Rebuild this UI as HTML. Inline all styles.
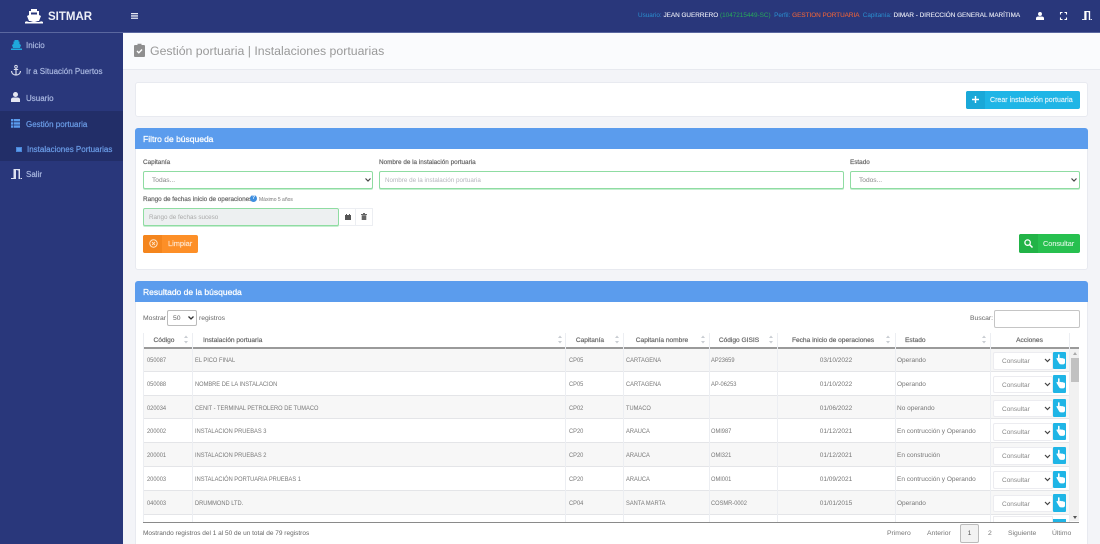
<!DOCTYPE html>
<html lang="es"><head><meta charset="utf-8"><title>SITMAR</title>
<style>
*{box-sizing:border-box}
html,body{margin:0;padding:0;width:1100px;height:544px;overflow:hidden}
body{background:#f3f4f8;font-family:"Liberation Sans",sans-serif;color:#666}
#w{position:relative;width:1100px;height:544px;overflow:hidden;background:#f3f4f8}
.a{position:absolute;white-space:nowrap}
.t{position:absolute;white-space:nowrap;line-height:12px;height:12px;margin-top:1px}
.card{position:absolute;background:#fff;border:1px solid #e8eaf0;border-radius:3px}
.hd{position:absolute;background:#5b9ced;color:#fff;font-size:8.5px;line-height:22px;height:21px;padding-left:8px;border-radius:3px 3px 0 0;-webkit-text-stroke:.25px #fff}
.lb{font-size:6.350px;color:#666;-webkit-text-stroke:.2px #666;margin-top:0}
.inp{position:absolute;height:18px;background:#fff;border:1px solid #8fdca2;border-radius:2px;font-size:6.6px;line-height:18px;padding-left:8px;color:#888;box-shadow:0 1px 0 #c5eed0}
.mi{color:#a9b7e0;font-size:8px;-webkit-text-stroke:.2px #a9b7e0}
.mb{color:#6b9de8;-webkit-text-stroke:.2px #6b9de8}
.th{font-size:6.6px;color:#666;text-align:center;-webkit-text-stroke:.2px #666}
.td{font-size:6.5px;color:#777}
.u{transform:scaleX(.88);transform-origin:0 0}
.vl{position:absolute;width:1px;background:#eceef2;top:333px;height:189px}
.row{position:absolute;left:143px;width:926px;height:23.8px;border-bottom:1px solid #e4e5e8}
.sel{position:absolute;left:993px;width:60px;height:17.500px;background:#fff;border:1px solid #ececf0;border-radius:2px;font-size:6.5px;line-height:18px;padding-left:8px;color:#888}
.hand{position:absolute;left:1053px;width:13px;height:17.500px;background:#1fb5e6;border-radius:1px}
.sv{position:absolute;overflow:visible}
</style></head><body><div id="w">

<!-- top bar -->
<div class="a" style="left:0;top:0;width:1100px;height:33px;background:#29377b;border-bottom:1px solid #5a679f"></div>
<!-- sidebar -->
<div class="a" style="left:0;top:33px;width:123px;height:511px;background:#29377b"></div>
<div class="a" style="left:0;top:111px;width:123px;height:50px;background:#222e68"></div>

<svg class="sv" style="left:25px;top:9px" width="18" height="15" viewBox="0 0 18 15"><path d="M6 0h6v2h2v4l2 1-2 5H4L2 7l2-1V2h2z" fill="#fff"/><path d="M6 3.500h6v2H6z" fill="#29377b"/><path d="M0 13c2-1.500 3 0 4.500 0S7 12 9 12s3 1 4.500 1 2.500-1.500 4.500 0v1.500H0z" fill="#fff"/></svg>
<div class="t" style="left:48px;top:10px;height:14px;line-height:14px;font-size:11.500px;font-weight:bold;color:#eef0f8;margin-top:0">SITMAR</div>
<svg class="sv" style="left:131px;top:13px" width="7" height="6"><path d="M0 0h7v1.300H0zM0 2.300h7v1.300H0zM0 4.600h7v1.300H0z" fill="#e6e8f2"/></svg>

<svg class="sv" style="left:11px;top:40px" width="11" height="10" viewBox="0 0 11 10"><path d="M3.500 0h4v1.500h1v2.500l1.500 1-1 3H2L1 5l1.500-1V1.500h1z" fill="#1fa9dc"/><path d="M0 8.500h11V10H0z" fill="#1fa9dc"/></svg>
<div class="t mi" style="left:26px;top:39px">Inicio</div>
<svg class="sv" style="left:11px;top:65px" width="10" height="11" viewBox="0 0 10 11"><circle cx="5" cy="1.700" r="1.300" fill="none" stroke="#d8dcec" stroke-width="1"/><path d="M4.400 3h1.200v6.500H4.400zM2.800 4h4.400v1H2.800z" fill="#d8dcec"/><path d="M.5 6c.2 2.500 2 4 4.500 4s4.300-1.500 4.500-4" fill="none" stroke="#d8dcec" stroke-width="1.200"/></svg>
<div class="t mi" style="left:26px;top:65px">Ir a Situación Puertos</div>
<svg class="sv" style="left:11px;top:92px" width="9" height="10" viewBox="0 0 9 10"><circle cx="4.500" cy="2.500" r="2.500" fill="#e4e6f2"/><path d="M0 10V7.500C0 6 1.500 5.500 2.500 5.500h4C7.500 5.500 9 6 9 7.500V10z" fill="#e4e6f2"/></svg>
<div class="t mi" style="left:26px;top:92px">Usuario</div>
<svg class="sv" style="left:11px;top:119px" width="9" height="9" viewBox="0 0 9 9"><path d="M0 0h2.400v2.400H0zM3 0h6v2.400H3zM0 3.200h2.400v2.400H0zM3 3.200h6v2.400H3zM0 6.400h2.400v2.400H0zM3 6.400h6v2.400H3z" fill="#5b9ced"/></svg>
<div class="t mi mb" style="left:26px;top:118px">Gestión portuaria</div>
<div class="a" style="left:16px;top:147px;width:6px;height:5px;background:#5b9ced;border:1px solid #4a86d8"></div>
<div class="t mi mb" style="left:27px;top:143px">Instalaciones Portuarias</div>
<svg class="sv" style="left:11px;top:169px" width="11" height="10" viewBox="0 0 11 10"><path d="M2.500 0H9v10H7.500V1.500L5 1v9H2.500z" fill="#dfe2f0"/><path d="M0 9h2.500v1H0zM9.500 9H11v1H9.500z" fill="#dfe2f0"/></svg>
<div class="t mi" style="left:26px;top:168px">Salir</div>

<!-- top info -->
<div class="a" style="left:638px;top:10px;font-size:6.370px;line-height:12px;color:#e8eaf4;-webkit-text-stroke:.12px #e8eaf4"><span style="color:#2a8fd0;-webkit-text-stroke:0">Usuario:</span> JEAN GUERRERO <span style="color:#27a85a;-webkit-text-stroke:0">(1047215449-SC)</span> <span style="color:#2a8fd0;-webkit-text-stroke:0">&nbsp;Perfil:</span> <span style="color:#e2623e;-webkit-text-stroke:.12px #e2623e">GESTION PORTUARIA</span> <span style="color:#2a8fd0;-webkit-text-stroke:0">&nbsp;Capitanía:</span> DIMAR - DIRECCIÓN GENERAL MARÍTIMA</div>
<svg class="sv" style="left:1036px;top:12px" width="8" height="8" viewBox="0 0 9 9"><circle cx="4.500" cy="2.200" r="2.200" fill="#fff"/><path d="M0 9V7c0-1.500 1.500-2 2.500-2h4C7.500 5 9 5.500 9 7v2z" fill="#fff"/></svg>
<svg class="sv" style="left:1060px;top:12px" width="7" height="8" viewBox="0 0 7 8"><path d="M.5 2.500V.5h2M4.500.5h2v2M6.500 5.500v2h-2M2.500 7.500h-2v-2" fill="none" stroke="#fff" stroke-width="1.100"/></svg>
<svg class="sv" style="left:1082px;top:11px" width="10" height="9" viewBox="0 0 11 10"><path d="M2.500 0H9v10H7.500V1.500L5 1v9H2.500z" fill="#fff"/><path d="M0 9h2.500v1H0zM9.500 9H11v1H9.500z" fill="#fff"/></svg>

<!-- title -->
<div class="a" style="left:123px;top:33px;width:977px;height:37px;background:#fafbfd;border-bottom:1px solid #e7e9ef"></div>
<svg class="sv" style="left:134px;top:43px" width="11" height="14" viewBox="0 0 11 14"><path d="M1 2h2.500V.8h4V2H10a1 1 0 0 1 1 1v10a1 1 0 0 1-1 1H1a1 1 0 0 1-1-1V3a1 1 0 0 1 1-1z" fill="#8f8f8f"/><path d="M3 8l1.800 1.800L8 6.500" fill="none" stroke="#fff" stroke-width="1.400"/></svg>
<div class="a" style="left:150px;top:43px;font-size:12.300px;line-height:16px;color:#999">Gestión portuaria | Instalaciones portuarias</div>

<!-- action card -->
<div class="card" style="left:135px;top:82px;width:953px;height:35px"></div>
<div class="a" style="left:966px;top:91px;width:114px;height:18px;background:#1fb5e6;border-radius:2px"></div>
<div class="a" style="left:966px;top:91px;width:19px;height:18px;background:#1aa8d8;border-radius:2px 0 0 2px"></div>
<svg class="sv" style="left:972px;top:96px" width="7" height="7"><path d="M2.800 0h1.400v2.800H7v1.400H4.200V7H2.800V4.200H0V2.800h2.800z" fill="#fff"/></svg>
<div class="t" style="left:990px;top:94px;font-size:7.050px;color:#e4f5fb;-webkit-text-stroke:.15px #e4f5fb">Crear instalación portuaria</div>

<!-- filter -->
<div class="card" style="left:135px;top:128px;width:953px;height:142px"></div>
<div class="hd" style="left:135px;top:128px;width:953px">Filtro de búsqueda</div>
<div class="t lb" style="left:143px;top:157px">Capitanía</div>
<div class="t lb" style="left:379px;top:157px">Nombre de la instalación portuaria</div>
<div class="t lb" style="left:850px;top:157px">Estado</div>
<div class="inp" style="left:143px;top:171px;width:230px">Todas...</div>
<svg class="sv" style="left:365px;top:178px" width="6" height="4"><path d="M.5.500L3 3l2.500-2.500" fill="none" stroke="#444" stroke-width="1.200"/></svg>
<div class="inp" style="left:379px;top:171px;width:465px;color:#b5b5bd;padding-left:5px;font-size:6.300px">Nombre de la instalación portuaria</div>
<div class="inp" style="left:850px;top:171px;width:230px">Todos...</div>
<svg class="sv" style="left:1071px;top:178px" width="6" height="4"><path d="M.5.500L3 3l2.500-2.500" fill="none" stroke="#444" stroke-width="1.200"/></svg>
<div class="t lb" style="left:143px;top:194px">Rango de fechas inicio de operaciones</div>
<div class="a" style="left:250px;top:195px;width:7px;height:7px;border-radius:50%;background:#3f8fe0;color:#fff;font-size:5px;line-height:7px;text-align:center;font-weight:bold">?</div>
<div class="t" style="left:259px;top:193px;font-size:5px;color:#777">Máximo 5 años</div>
<div class="inp" style="left:143px;top:208px;width:196px;background:#edf0f1;color:#aaa;padding-left:5px;font-size:6.300px">Rango de fechas suceso</div>
<div class="a" style="left:339px;top:208px;width:34px;height:18px;border:1px solid #eceef2;border-left:0"></div>
<div class="a" style="left:355px;top:208px;width:1px;height:18px;background:#eceef2"></div>
<svg class="sv" style="left:345px;top:214px" width="6" height="6"><path d="M0 1h6v5H0z" fill="#555"/><path d="M1 0h1v1H1zM4 0h1v1H4z" fill="#555"/></svg>
<svg class="sv" style="left:361px;top:213px" width="6" height="7"><path d="M0 1h6v1H0zM2 0h2v1H2zM.7 2.300h4.600V7H.7z" fill="#666"/></svg>
<div class="a" style="left:143px;top:235px;width:55px;height:18px;background:#fd8f27;border-radius:2px"></div>
<div class="a" style="left:143px;top:235px;width:19px;height:18px;background:#f4851d;border-radius:2px 0 0 2px"></div>
<svg class="sv" style="left:149px;top:239px" width="9" height="9" viewBox="0 0 9 9"><circle cx="4.500" cy="4.500" r="3.700" fill="none" stroke="#ffe3c5" stroke-width="1"/><path d="M3 3l3 3M6 3L3 6" stroke="#ffe3c5" stroke-width=".9"/></svg>
<div class="t" style="left:168px;top:237px;font-size:7.400px;color:#ffe8d2;-webkit-text-stroke:.15px #ffe8d2">Limpiar</div>
<div class="a" style="left:1019px;top:234px;width:61px;height:19px;background:#27c04f;border-radius:2px"></div>
<div class="a" style="left:1019px;top:234px;width:19px;height:19px;background:#22b347;border-radius:2px 0 0 2px"></div>
<svg class="sv" style="left:1024px;top:239px" width="9" height="9" viewBox="0 0 9 9"><circle cx="3.600" cy="3.600" r="2.700" fill="none" stroke="#fff" stroke-width="1.300"/><path d="M5.600 5.600L8.500 8.500" stroke="#fff" stroke-width="1.500"/></svg>
<div class="t" style="left:1043px;top:237px;font-size:7.300px;color:#dff7e5;-webkit-text-stroke:.1px #dff7e5">Consultar</div>

<!-- results -->
<div class="card" style="left:135px;top:281px;width:953px;height:263px;border-bottom:0;border-radius:3px 3px 0 0"></div>
<div class="hd" style="left:135px;top:281px;width:953px">Resultado de la búsqueda</div>
<div class="t td" style="left:143px;top:312px;color:#666;font-size:6.800px">Mostrar</div>
<div class="a" style="left:167px;top:310px;width:30px;height:16px;border:1px solid #bbb;border-radius:2px;font-size:6.800px;line-height:15px;padding-left:5px;color:#666">50</div>
<svg class="sv" style="left:188px;top:316px" width="6" height="4"><path d="M.5.500L3 3l2.500-2.500" fill="none" stroke="#333" stroke-width="1.300"/></svg>
<div class="t td" style="left:199px;top:312px;color:#666;font-size:6.800px">registros</div>
<div class="t td" style="left:970px;top:312px;color:#666;font-size:6.800px">Buscar:</div>
<div class="a" style="left:994px;top:310px;width:86px;height:18px;border:1px solid #c5c5c5;border-radius:2px;background:#fff"></div>

<!-- rows -->
<div class="row" style="top:348px;background:#f7f7f7"></div>
<div class="row" style="top:371.800px;background:#fff"></div>
<div class="row" style="top:395.600px;background:#f7f7f7"></div>
<div class="row" style="top:419.400px;background:#fff"></div>
<div class="row" style="top:443.200px;background:#f7f7f7"></div>
<div class="row" style="top:467px;background:#fff"></div>
<div class="row" style="top:490.800px;background:#f7f7f7"></div>
<div class="row" style="top:514.600px;background:#fff;height:7px;border:0"></div>
<div class="a" style="left:143px;top:347px;width:936px;height:2px;background:#9a9a9a"></div>
<div class="a" style="left:143px;top:521.500px;width:936px;height:1.500px;background:#8a8a8a"></div>

<div class="vl" style="left:143px"></div><div class="vl" style="left:192px"></div><div class="vl" style="left:565px"></div><div class="vl" style="left:623px"></div><div class="vl" style="left:709px"></div><div class="vl" style="left:777px"></div><div class="vl" style="left:895px"></div><div class="vl" style="left:990px"></div><div class="vl" style="left:1069px"></div>

<div class="t th" style="left:143px;top:334px;width:42px">Código</div>
<div class="t th" style="left:203px;top:334px">Instalación portuaria</div>
<div class="t th" style="left:565px;top:334px;width:50px">Capitanía</div>
<div class="t th" style="left:623px;top:334px;width:78px">Capitanía nombre</div>
<div class="t th" style="left:709px;top:334px;width:60px">Código GISIS</div>
<div class="t th" style="left:777px;top:334px;width:112px">Fecha inicio de operaciones</div>
<div class="t th" style="left:905px;top:334px">Estado</div>
<div class="t th" style="left:990px;top:334px;width:79px">Acciones</div>
<svg class="sv" style="left:0;top:0" width="1100" height="544"><g fill="#c9cdd3"><path d="M184 338l2-2.500 2 2.500zM184 341h4l-2 2.500z"/><path d="M558 338l2-2.500 2 2.500zM558 341h4l-2 2.500z"/><path d="M615 338l2-2.500 2 2.500zM615 341h4l-2 2.500z"/><path d="M701 338l2-2.500 2 2.500zM701 341h4l-2 2.500z"/><path d="M769 338l2-2.500 2 2.500zM769 341h4l-2 2.500z"/><path d="M886 338l2-2.500 2 2.500zM886 341h4l-2 2.500z"/><path d="M982 338l2-2.500 2 2.500zM982 341h4l-2 2.500z"/></g></svg>

<!-- row text -->
<div class="t td u" style="left:147px;top:354px">050087</div><div class="t td u" style="left:195px;top:354px">EL PICO FINAL</div><div class="t td u" style="left:569px;top:354px">CP05</div><div class="t td u" style="left:626px;top:354px">CARTAGENA</div><div class="t td u" style="left:711px;top:354px">AP23659</div><div class="t td" style="left:777px;top:354px;width:118px;text-align:center">03/10/2022</div><div class="t td" style="left:897px;top:354px">Operando</div>
<div class="t td u" style="left:147px;top:378px">050088</div><div class="t td u" style="left:195px;top:378px">NOMBRE DE LA INSTALACION</div><div class="t td u" style="left:569px;top:378px">CP05</div><div class="t td u" style="left:626px;top:378px">CARTAGENA</div><div class="t td u" style="left:711px;top:378px">AP-06253</div><div class="t td" style="left:777px;top:378px;width:118px;text-align:center">01/10/2022</div><div class="t td" style="left:897px;top:378px">Operando</div>
<div class="t td u" style="left:147px;top:402px">020034</div><div class="t td u" style="left:195px;top:402px">CENIT - TERMINAL PETROLERO DE TUMACO</div><div class="t td u" style="left:569px;top:402px">CP02</div><div class="t td u" style="left:626px;top:402px">TUMACO</div><div class="t td" style="left:777px;top:402px;width:118px;text-align:center">01/06/2022</div><div class="t td" style="left:897px;top:402px">No operando</div>
<div class="t td u" style="left:147px;top:425px">200002</div><div class="t td u" style="left:195px;top:425px">INSTALACION PRUEBAS 3</div><div class="t td u" style="left:569px;top:425px">CP20</div><div class="t td u" style="left:626px;top:425px">ARAUCA</div><div class="t td u" style="left:711px;top:425px">OMI987</div><div class="t td" style="left:777px;top:425px;width:118px;text-align:center">01/12/2021</div><div class="t td" style="left:897px;top:425px">En contrucción y Operando</div>
<div class="t td u" style="left:147px;top:449px">200001</div><div class="t td u" style="left:195px;top:449px">INSTALACION PRUEBAS 2</div><div class="t td u" style="left:569px;top:449px">CP20</div><div class="t td u" style="left:626px;top:449px">ARAUCA</div><div class="t td u" style="left:711px;top:449px">OMI321</div><div class="t td" style="left:777px;top:449px;width:118px;text-align:center">01/12/2021</div><div class="t td" style="left:897px;top:449px">En construción</div>
<div class="t td u" style="left:147px;top:473px">200003</div><div class="t td u" style="left:195px;top:473px">INSTALACIÓN PORTUARIA PRUEBAS 1</div><div class="t td u" style="left:569px;top:473px">CP20</div><div class="t td u" style="left:626px;top:473px">ARAUCA</div><div class="t td u" style="left:711px;top:473px">OMI001</div><div class="t td" style="left:777px;top:473px;width:118px;text-align:center">01/09/2021</div><div class="t td" style="left:897px;top:473px">En contrucción y Operando</div>
<div class="t td u" style="left:147px;top:497px">040003</div><div class="t td u" style="left:195px;top:497px">DRUMMOND LTD.</div><div class="t td u" style="left:569px;top:497px">CP04</div><div class="t td u" style="left:626px;top:497px">SANTA MARTA</div><div class="t td u" style="left:711px;top:497px">COSMR-0002</div><div class="t td" style="left:777px;top:497px;width:118px;text-align:center">01/01/2015</div><div class="t td" style="left:897px;top:497px">Operando</div>

<!-- actions -->
<div class="sel" style="top:352px">Consultar</div><div class="hand" style="top:351.500px"></div>
<div class="sel" style="top:375.800px">Consultar</div><div class="hand" style="top:375.300px"></div>
<div class="sel" style="top:399.600px">Consultar</div><div class="hand" style="top:399.100px"></div>
<div class="sel" style="top:423.400px">Consultar</div><div class="hand" style="top:422.900px"></div>
<div class="sel" style="top:447.200px">Consultar</div><div class="hand" style="top:446.700px"></div>
<div class="sel" style="top:471px">Consultar</div><div class="hand" style="top:470.500px"></div>
<div class="sel" style="top:494.800px">Consultar</div><div class="hand" style="top:494.300px"></div>
<div class="a" style="left:993px;top:516px;width:60px;height:5.500px;background:#fff;border:1px solid #ececf0;border-bottom:0"></div>
<div class="a" style="left:1053px;top:519px;width:13px;height:2.500px;background:#1fb5e6"></div>
<svg class="sv" style="left:0;top:0" width="1100" height="544">
<g fill="#fff"><path d="M1058 355c0-1 1.600-1 1.600 0v3.200c.8-.5 1.700-.4 2 .1.800-.4 1.500-.2 1.800.3 1-.2 1.600.4 1.600 1.200v2.600c0 1.200-.8 2-2 2h-2c-.9 0-1.400-.4-1.900-1.100l-2.500-4.300c-.5-.9.500-1.600 1.300-.9l.1.900z"/>
<path d="M1058 379c0-1 1.600-1 1.600 0v3.200c.8-.5 1.700-.4 2 .1.800-.4 1.500-.2 1.800.3 1-.2 1.600.4 1.600 1.200v2.600c0 1.200-.8 2-2 2h-2c-.9 0-1.400-.4-1.900-1.100l-2.500-4.300c-.5-.9.500-1.600 1.300-.9l.1.900z"/>
<path d="M1058 403c0-1 1.600-1 1.600 0v3.200c.8-.5 1.700-.4 2 .1.800-.4 1.500-.2 1.800.3 1-.2 1.600.4 1.600 1.200v2.600c0 1.200-.8 2-2 2h-2c-.9 0-1.400-.4-1.900-1.100l-2.500-4.300c-.5-.9.500-1.600 1.300-.9l.1.900z"/>
<path d="M1058 426.500c0-1 1.600-1 1.600 0v3.200c.8-.5 1.700-.4 2 .1.800-.4 1.500-.2 1.800.3 1-.2 1.600.4 1.600 1.200v2.600c0 1.200-.8 2-2 2h-2c-.9 0-1.400-.4-1.900-1.100l-2.500-4.300c-.5-.9.500-1.600 1.300-.9l.1.900z"/>
<path d="M1058 450.500c0-1 1.600-1 1.600 0v3.200c.8-.5 1.700-.4 2 .1.800-.4 1.500-.2 1.800.3 1-.2 1.600.4 1.600 1.200v2.600c0 1.200-.8 2-2 2h-2c-.9 0-1.400-.4-1.900-1.100l-2.500-4.300c-.5-.9.500-1.600 1.300-.9l.1.900z"/>
<path d="M1058 474c0-1 1.600-1 1.600 0v3.200c.8-.5 1.700-.4 2 .1.800-.4 1.500-.2 1.800.3 1-.2 1.600.4 1.600 1.200v2.600c0 1.200-.8 2-2 2h-2c-.9 0-1.400-.4-1.900-1.100l-2.500-4.300c-.5-.9.500-1.600 1.300-.9l.1.900z"/>
<path d="M1058 498c0-1 1.600-1 1.600 0v3.200c.8-.5 1.700-.4 2 .1.800-.4 1.500-.2 1.800.3 1-.2 1.600.4 1.600 1.200v2.600c0 1.200-.8 2-2 2h-2c-.9 0-1.400-.4-1.900-1.100l-2.500-4.300c-.5-.9.500-1.600 1.300-.9l.1.900z"/></g>
<g fill="none" stroke="#444" stroke-width="1.200"><path d="M1045 359l2.500 2.500 2.500-2.500"/><path d="M1045 383l2.500 2.500 2.500-2.500"/><path d="M1045 407l2.500 2.500 2.500-2.500"/><path d="M1045 431l2.500 2.500 2.500-2.500"/><path d="M1045 455l2.500 2.500 2.500-2.500"/><path d="M1045 478l2.500 2.500 2.500-2.500"/><path d="M1045 502l2.500 2.500 2.500-2.500"/></g>
</svg>

<!-- scrollbar -->
<div class="a" style="left:1070px;top:349px;width:9px;height:172px;background:#f1f1f1"></div>
<div class="a" style="left:1071px;top:358px;width:8px;height:24px;background:#c1c1c1"></div>
<svg class="sv" style="left:1072px;top:351px" width="6" height="170"><path d="M1 4l2-3 2 3z" fill="#aaa"/><path d="M1 165l2 3 2-3z" fill="#555"/></svg>

<!-- footer -->
<div class="t td" style="left:143px;top:527px;color:#666;font-size:6.500px">Mostrando registros del 1 al 50 de un total de 79 registros</div>
<div class="t td" style="left:887px;top:527px;font-size:6.800px">Primero</div>
<div class="t td" style="left:927px;top:527px;font-size:6.800px">Anterior</div>
<div class="a" style="left:960px;top:524px;width:19px;height:19px;border:1px solid #bbb;border-radius:2px;background:#f2f2f2;font-size:6.800px;line-height:18px;text-align:center;color:#555">1</div>
<div class="t td" style="left:988px;top:527px;font-size:6.800px">2</div>
<div class="t td" style="left:1008px;top:527px;font-size:6.800px">Siguiente</div>
<div class="t td" style="left:1052px;top:527px;font-size:6.800px">Último</div>

</div></body></html>
